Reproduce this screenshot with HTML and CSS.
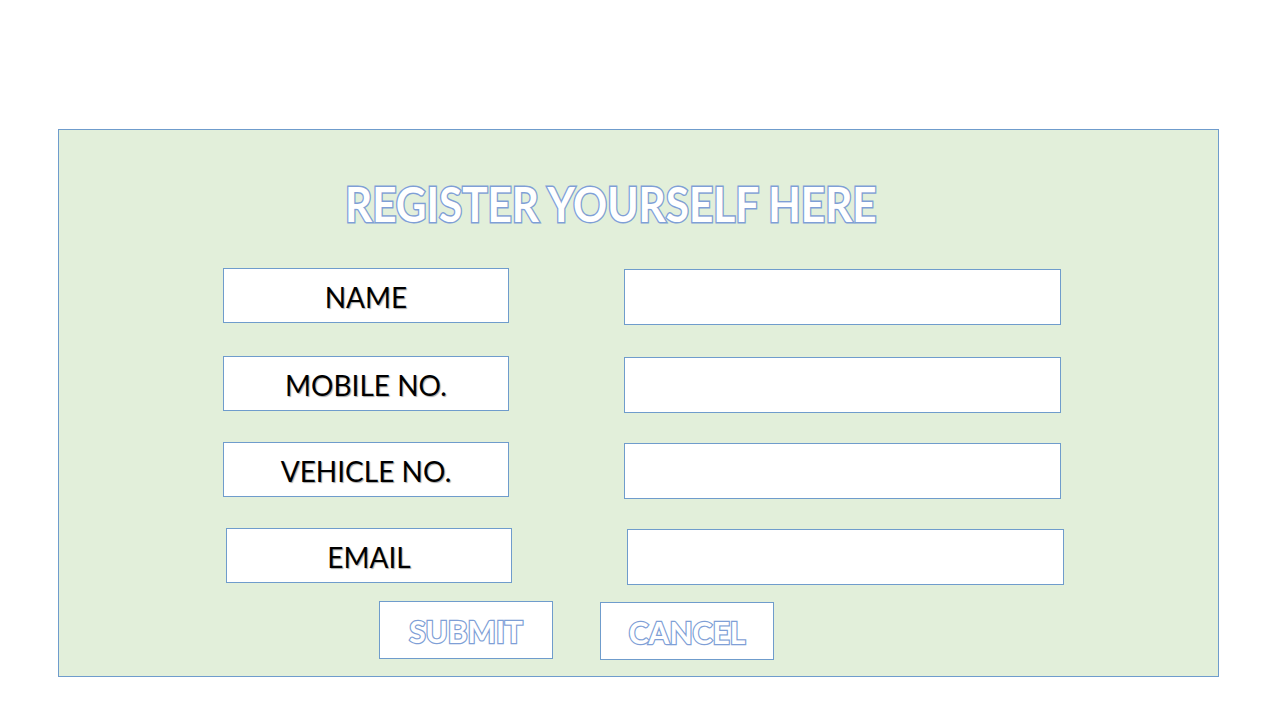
FILE: index.html
```html
<!DOCTYPE html>
<html>
<head>
<meta charset="utf-8">
<link rel="stylesheet" href="styles.css">
</head>
<body>
<div class="panel">
  <h1 class="title"><span class="title-text">REGISTER YOURSELF HERE</span></h1>
  <div class="rows">
    <div class="row">
      <div class="label">NAME</div>
      <div class="field"></div>
    </div>
    <div class="row row-b">
      <div class="label">MOBILE NO.</div>
      <div class="field"></div>
    </div>
    <div class="row">
      <div class="label">VEHICLE NO.</div>
      <div class="field"></div>
    </div>
    <div class="row row-d">
      <div class="label">EMAIL</div>
      <div class="field"></div>
    </div>
  </div>
  <div class="actions">
    <div class="btn">SUBMIT</div>
    <div class="btn btn-cancel">CANCEL</div>
  </div>
</div>
</body>
</html>
```

FILE: styles.css
```css
html, body {
  margin: 0;
  padding: 0;
  background: #ffffff;
  width: 1280px;
  height: 720px;
  overflow: hidden;
  font-family: Lato, "Open Sans", "Liberation Sans", sans-serif;
}

.panel {
  box-sizing: border-box;
  margin: 129px 0 0 58px;
  width: 1161px;
  height: 548px;
  background: #e2efda;
  border: 1px solid #6f9ccc;
  padding: 0 0 0 164px;
}

.title {
  margin: 44px 0 0 122px;
  font-size: 48px;
  line-height: 60px;
  font-weight: 700;
  color: #ffffff;
  -webkit-text-stroke: 3px #7f9fd6;
  paint-order: stroke fill;
  letter-spacing: 0;
  white-space: nowrap;
}

.title-text {
  display: inline-block;
  transform: scaleX(0.88);
  transform-origin: left center;
}

.rows {
  margin-top: 34px;
  display: flex;
  flex-direction: column;
  gap: 29px;
}

.row {
  display: flex;
  align-items: flex-start;
  gap: 115px;
}

.row-b { margin-top: 2px; }
.row-d { margin-left: 3px; }

.label {
  box-sizing: border-box;
  width: 286px;
  height: 55px;
  padding-top: 2px;
  background: #ffffff;
  border: 1px solid #6f9ccc;
  display: flex;
  align-items: center;
  justify-content: center;
  font-size: 28px;
  color: #000000;
  text-shadow: 1px 1px 1px rgba(0, 0, 0, 0.35);
}

.field {
  box-sizing: border-box;
  width: 437px;
  height: 56px;
  margin-top: 1px;
  background: #ffffff;
  border: 1px solid #6f9ccc;
}

.actions {
  display: flex;
  gap: 47px;
  margin: 16px 0 0 156px;
}

.btn {
  box-sizing: border-box;
  width: 174px;
  height: 58px;
  padding-top: 2px;
  background: #ffffff;
  border: 1px solid #6f9ccc;
  display: flex;
  align-items: center;
  justify-content: center;
  font-size: 30px;
  font-weight: 700;
  color: #ffffff;
  -webkit-text-stroke: 2.5px #7f9fd6;
  paint-order: stroke fill;
}

.btn-cancel { margin-top: 1px; }
```
